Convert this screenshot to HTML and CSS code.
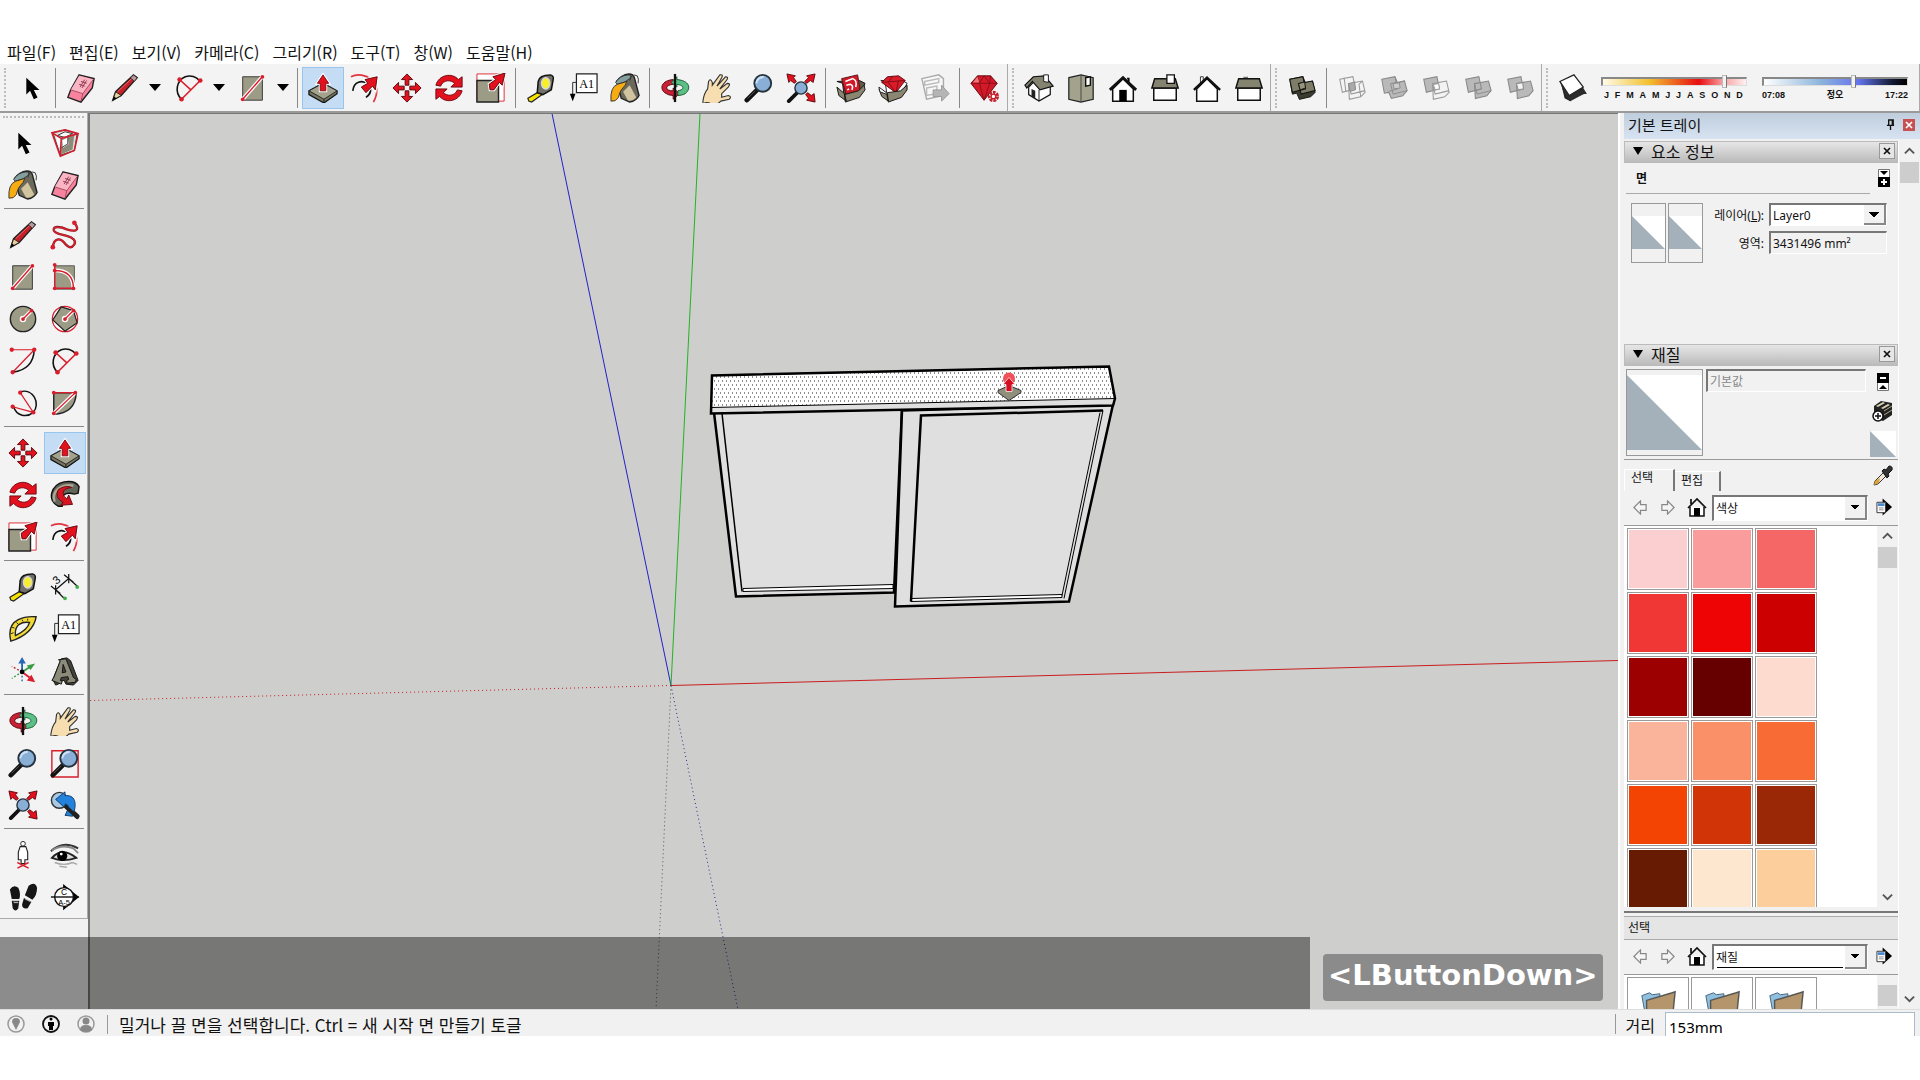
FILE: index.html
```html
<!DOCTYPE html>
<html lang="ko">
<head>
    <meta charset="UTF-8">
    <meta name="viewport" content="width=device-width, initial-scale=1.0">
    <title>SketchUp</title>
    <link rel="stylesheet" href="styles.css">
</head>
<body>
    <!-- Icon set shared by both toolbars -->
    <svg class="sprite" aria-hidden="true">
        <symbol id="i-select" viewBox="0 0 32 32"><path d="M11 5v18l4-4 4 9 4-2-4-8h6z"/></symbol>
        <symbol id="i-component" viewBox="0 0 32 32">
            <path d="M3 5l13-3 13 4-3 18-15 5z" fill="#ddd" stroke="#333"/>
            <path d="M12 12l14-5-2 16-12 5z" fill="#8c8b79"/><path d="M6 8l6 3v10l-3-1zM13 13l6-3 1 7-6 4z" fill="#fff"/>
            <path d="M8 8l8-4 8 2-8 4zM19 10v7l-7 4" fill="#fff" stroke="#333"/>
            <path d="M2 5l14-3 14 4-4 18-15 6zM2 5l10 6 18-5M12 11l-1 19" fill="none" stroke="#cf2030" stroke-width="1.700"/>
        </symbol>
        <symbol id="i-eraser" viewBox="0 0 32 32">
            <path d="M14 2l16 4-2 10-12 15L2 26l3-8z" fill="#f7839e" stroke="#222" stroke-width="1.5"/>
            <path d="M14 3l15 4-11 15L5 18z" fill="#fbb4c3"/><path d="M5 18l13 4-2 8M18 22L29 7" fill="none" stroke="#a5475d"/>
            <path d="M15 15l5-8M17 16l5-8M14 12l6 2M16 9l6 2" stroke="#8a3a4c"/>
        </symbol>
        <symbol id="i-pencil" viewBox="0 0 32 32">
            <path d="M3 29l3-9L25 2l4 3-17 19z" fill="#c8202b" stroke="#222" stroke-width="1.5"/>
            <path d="M3 29l3-9 6 4z" fill="#e8cf9b" stroke="#222"/><path d="M3 29l1-4 3 2z"/>
            <path d="M22 5l3-3 4 3-3 4z" fill="#b9999b" stroke="#333"/><path d="M8 20L23 6" stroke="#ee6a6a"/>
        </symbol>
        <symbol id="i-arc" viewBox="0 0 32 32">
            <path d="M8 28C0 20 3 8 12 4c6-2 12 0 15 4" fill="none" stroke="#111" stroke-width="1.7"/>
            <path d="M8 28L28 8M7 8l11 10" stroke="#d81e2c" stroke-width="1.7"/>
            <g fill="#d81e2c"><circle cx="8" cy="28" r="2.5"/><circle cx="28" cy="8" r="2.5"/><circle cx="6" cy="7" r="2.5"/></g>
        </symbol>
        <symbol id="i-rect" viewBox="0 0 32 32">
            <path d="M5 4h21v25H5z" fill="#9c9b86" stroke="#333"/>
            <path d="M5 28L26 4" stroke="#fff" stroke-width="4"/><path d="M5 28L26 4" stroke="#d81e2c" stroke-width="1.5"/>
            <g fill="#d81e2c"><circle cx="5" cy="28" r="2"/><circle cx="26" cy="4" r="2"/></g>
        </symbol>
        <symbol id="i-rotrect" viewBox="0 0 32 32">
            <path d="M5 4h21v25H5z" fill="#9c9b86" stroke="#555"/>
            <path d="M5 9q20 0 20 19" fill="none" stroke="#fff" stroke-width="4"/>
            <path d="M5 3v25h20Q25 9 5 9" fill="none" stroke="#d81e2c" stroke-width="1.5"/>
            <g fill="#d81e2c"><circle cx="5" cy="3" r="2"/><circle cx="5" cy="9" r="2"/><circle cx="5" cy="28" r="2"/><circle cx="25" cy="28" r="2"/></g>
        </symbol>
        <symbol id="i-freehand" viewBox="0 0 32 32">
            <path d="M26 3c8 10-2 9-8 7-7-3-15-4-14 1 1 4 8 4 14 6 7 2 10 5 8 9-4 6-8 2-11-2-4-5-11-5-12 5" fill="none" stroke="#8e1620" stroke-width="2.5"/>
            <path d="M26 3c8 10-2 9-8 7-7-3-15-4-14 1 1 4 8 4 14 6 7 2 10 5 8 9-4 6-8 2-11-2-4-5-11-5-12 5" fill="none" stroke="#dc2430" stroke-width="1.3"/>
            <g fill="#d81e2c"><circle cx="26" cy="3" r="2.5"/><circle cx="3" cy="29" r="2.5"/></g>
        </symbol>
        <symbol id="i-circle" viewBox="0 0 32 32">
            <circle cx="16" cy="16" r="13.5" fill="#9c9b86" stroke="#222" stroke-width="1.5"/>
            <path d="M16 16l9-9" stroke="#fff" stroke-width="4"/><circle cx="16" cy="16" r="3.5" fill="#fff"/>
            <path d="M16 16l9-9" stroke="#d81e2c" stroke-width="1.5"/><g fill="#d81e2c"><circle cx="16" cy="16" r="2"/><circle cx="25" cy="7" r="2"/></g>
        </symbol>
        <symbol id="i-polygon" viewBox="0 0 32 32">
            <circle cx="16" cy="16" r="13.5" fill="#fff" stroke="#d81e2c" stroke-width="1.3"/>
            <path d="M12 3l13 4 4 13-13 9L3 17z" fill="#9c9b86" stroke="#222" stroke-width="1.3"/>
            <path d="M16 16l9-9" stroke="#fff" stroke-width="4"/><circle cx="16" cy="16" r="3.5" fill="#fff"/>
            <path d="M16 16l9-9" stroke="#d81e2c" stroke-width="1.5"/><g fill="#d81e2c"><circle cx="16" cy="16" r="2"/><circle cx="25" cy="7" r="2"/></g>
        </symbol>
        <symbol id="i-arc1" viewBox="0 0 32 32">
            <path d="M28 4Q27 25 5 28" fill="none" stroke="#111" stroke-width="1.6"/>
            <path d="M4 4h24L5 28" fill="none" stroke="#d81e2c" stroke-width="1.3"/>
            <g fill="#d81e2c"><circle cx="4" cy="4" r="2.3"/><circle cx="28" cy="4" r="2.3"/><circle cx="5" cy="28" r="2.3"/></g>
        </symbol>
        <symbol id="i-arc3" viewBox="0 0 32 32">
            <path d="M13 4c14-4 22 13 14 22-7 6-18 4-21-6" fill="none" stroke="#111" stroke-width="1.6"/>
            <path d="M13 5l14 21L5 20" fill="none" stroke="#d81e2c" stroke-width="1.3"/>
            <g fill="#d81e2c"><circle cx="13" cy="5" r="2.3"/><circle cx="27" cy="26" r="2.3"/><circle cx="5" cy="20" r="2.3"/></g>
        </symbol>
        <symbol id="i-pie" viewBox="0 0 32 32">
            <path d="M4 5h24q-1 22-24 23z" fill="#9c9b86" stroke="#222" stroke-width="1.5"/>
            <path d="M4 27L27 5" stroke="#fff" stroke-width="4"/><path d="M4 5h23L4 27" fill="none" stroke="#d81e2c" stroke-width="1.3"/>
            <g fill="#d81e2c"><circle cx="4" cy="5" r="2"/><circle cx="27" cy="5" r="2"/><circle cx="4" cy="27" r="2"/></g>
        </symbol>
        <symbol id="i-pushpull" viewBox="0 0 32 32">
            <path d="M1 19l15-8 15 8v3L17 32 1 23z" fill="#76755f" stroke="#111" stroke-width="1.300"/>
            <path d="M1 19l15-8 15 8-14 9z" fill="#a3a28d" stroke="#222"/><path d="M17 28v4" stroke="#111"/>
            <path d="M13 19v-8H10l6-9 6 9h-3v8z" fill="#e3101d" stroke="#fff" stroke-width="3"/>
            <path d="M13 19v-8H10l6-9 6 9h-3v8z" fill="#e3101d" stroke="#7d0d14"/>
        </symbol>
        <symbol id="i-offset" viewBox="0 0 32 32">
            <path d="M1 4C15-3 37 10 25 31" fill="none" stroke="#e23440" stroke-width="1.8"/>
            <path d="M3 19c1-10 10-12 16-7 5 5 3 11-2 14" fill="none" stroke="#111" stroke-width="1.8"/>
            <path d="M12 15l7-4-3-4L29 4l-2 14-3-4-7 7z" fill="#e3101d" stroke="#fff" stroke-width="3"/>
            <path d="M12 15l7-4-3-4L29 4l-2 14-3-4-7 7z" fill="#e3101d" stroke="#5c0a10"/>
        </symbol>
        <symbol id="i-move" viewBox="0 0 32 32">
            <path d="M16 1l-6 6h4v6h4V7h4zM16 31l6-6h-4v-6h-4v6h-4zM1 16l6 6v-4h6v-4H7v-4zM31 16l-6-6v4h-6v4h6v4z" fill="#e3101d" stroke="#5c0a10"/>
        </symbol>
        <symbol id="i-rotate" viewBox="0 0 32 32">
            <path d="M2 13C5 2 19-1 26 7l4-3v11H18l4-4c-4-4-12-4-15 3z" fill="#e3101d" stroke="#6b0b12"/>
            <path d="M30 19C27 30 13 33 6 25l-4 3V17h12l-4 4c4 4 12 4 15-3z" fill="#e3101d" stroke="#6b0b12"/>
        </symbol>
        <symbol id="i-scale" viewBox="0 0 32 32">
            <path d="M1 1h29v29H1z" fill="#fff" stroke="#df2733"/>
            <path d="M1 8h23v23H1z" fill="#9c9b86" stroke="#222" stroke-width="1.5"/>
            <path d="M14 12l7-5-3-3 13-4-3 13-3-3-6 8-4 0z" fill="#e3101d" stroke="#fff" stroke-width="3"/>
            <path d="M14 12l7-5-3-3 13-4-3 13-3-3-6 8-4 0z" fill="#e3101d" stroke="#5c0a10"/>
        </symbol>
        <symbol id="i-follow" viewBox="0 0 32 32">
            <path d="M9 28C-4 22 1 5 15 2q12-2 16 5l-1 7-4 1c-10-3-15 2-12 8l-1 5z" fill="#66655a" stroke="#111" stroke-width="1.5"/>
            <path d="M5 23C1 12 12 4 25 6" fill="none" stroke="#aaa996" stroke-width="2.5"/>
            <path d="M9 10q8-5 14-2-9 1-9 6 0 4 4 6l2-4 4 10-13 1 3-3q-10-6-5-14z" fill="#d81420" stroke="#6b0b12"/>
        </symbol>
        <symbol id="i-tape" viewBox="0 0 32 32">
            <path d="M2 27l15-9 3 3-14 10-3-1z" fill="#f4e100" stroke="#222" stroke-width="1.3"/>
            <path d="M13 9q1-7 13-7 4 1 3 5l-2 11-9 5-6-2z" fill="#706f68" stroke="#111" stroke-width="1.6"/>
            <ellipse cx="21" cy="11" rx="4.5" ry="6" fill="#f9ef26" stroke="#d8d8d8" stroke-width="1.5"/>
        </symbol>
        <symbol id="i-text" viewBox="0 0 32 32">
            <path d="M9 1h22v20H9z" fill="#fff" stroke="#222" stroke-width="1.3"/><path d="M9 10H5v14" fill="none" stroke="#222"/>
            <path d="M2 22h6l-3 8z"/><text x="20" y="16" font-size="13" text-anchor="middle" font-family="Liberation Serif, serif">A1</text>
        </symbol>
        <symbol id="i-paint" viewBox="0 0 32 32">
            <path d="M7 9Q12 2 20 1q5 0 6 4l5 19q-3 6-10 7l-9-4z" fill="#6b695c" stroke="#222" stroke-width="1.500"/>
            <path d="M14 20l7-7 7 13q-5 5-9 3z" fill="#d2c49f"/><path d="M6 10Q10 3 19 2q5 0 2 4-4 4-13 6z" fill="#83a09f" stroke="#333"/>
            <path d="M1 30q-1-15 7-18l10-3q-1 4-6 9-2 3-3 8-3 5-8 4z" fill="#f8ac14" stroke="#333"/>
            <path d="M21 8q2-8 8-5 2 3 1 8" fill="none" stroke="#333"/>
        </symbol>
        <symbol id="i-dimension" viewBox="0 0 32 32">
            <path d="M6 19L20 7M20 7l10 9M6 19l9 9M1 15l10 8M6 14v10M15 3l10 8M20 2v10" stroke="#111" stroke-width="1.3"/>
            <g fill="#3fae49"><circle cx="29" cy="16" r="2"/><circle cx="16" cy="28" r="2"/></g>
            <text x="4" y="12" font-size="12" transform="rotate(-40 8 9)" font-family="Liberation Sans, sans-serif">3</text>
        </symbol>
        <symbol id="i-protractor" viewBox="0 0 32 32">
            <path d="M3 29Q-1 12 11 6q8-4 19-3-3 18-27 26zM8 23q13-6 15-14-7-1-11 2-5 4-4 12z" fill="#f2d936" fill-rule="evenodd" stroke="#222" stroke-width="1.5"/>
            <path d="M3 21l3-1M4 14l3 1M9 9l2 2M15 6l1 2M21 5v2" stroke="#222"/>
        </symbol>
        <symbol id="i-axes" viewBox="0 0 32 32">
            <path d="M15 17V29" stroke="#2e62a8" stroke-width="1.500" stroke-dasharray="2 2"/><path d="M15 17L4 11" stroke="#c2202c" stroke-width="1.500" stroke-dasharray="2 2"/><path d="M15 17L4 24" stroke="#3a9b45" stroke-width="1.500" stroke-dasharray="2 2"/>
            <path d="M15 17V7" stroke="#2868b8" stroke-width="2"/><path d="M15 17l8-5" stroke="#3a9b45" stroke-width="2"/><path d="M15 17l8 6" stroke="#d81e2c" stroke-width="2"/>
            <path d="M11 8l4-7 4 7z" fill="#2868b8"/><path d="M20 10l9-2-5 7z" fill="#3a9b45"/><path d="M25 20l4 8-9-2z" fill="#d81e2c"/><circle cx="15" cy="17" r="2.5"/>
        </symbol>
        <symbol id="i-text3d" viewBox="0 0 32 32">
            <path d="M3 25l9-22 6-1 4 3 8 21-5 5-8-1-2-4-4 1-2 3-3 1z" fill="#44433a" stroke="#111"/>
            <path d="M2 26l2-3 7-18-2-1 8-1 8 20 3 2-1 3-9 1v-3l2-1-1-3-7 1-1 3 2 1-1 3zM13 18l4-1-3-8z" fill="#8c8b7a" fill-rule="evenodd" stroke="#111"/>
        </symbol>
        <symbol id="i-orbit" viewBox="0 0 32 32">
            <path d="M14 7C2 8-1 16 5 21q4 3 9 3v4l7-6-7-6v3q-6 0-7-3 0-3 7-4z" fill="#c92035" stroke="#5c0a10"/>
            <path d="M18 7c13 1 16 9 9 15-2 1-5 2-8 2v-5c6-1 7-4 3-6l-4-1v3l-6-5 6-6z" fill="#5cbf85" stroke="#155c32"/>
            <path d="M16 1v30" stroke="#111" stroke-width="2.5"/>
        </symbol>
        <symbol id="i-pan" viewBox="0 0 32 32">
            <path d="M1 30q1-8 5-13l1-8q2-4 4 1v3l8-11q4-1 2 3l-5 9 9-10q4 0 1 4l-7 9 8-6q4 0 1 4l-7 7 0 4 7-2q4 1 1 4l-9 2q-6 6-10 3-5-3-9 0z" fill="#f7deb0" stroke="#333" stroke-width="1.2"/>
        </symbol>
        <symbol id="i-zoom" viewBox="0 0 32 32">
            <path d="M3 29L14 18" stroke="#111" stroke-width="5" stroke-linecap="round"/><path d="M4 27l8-8" stroke="#555" stroke-width="1"/>
            <circle cx="20" cy="11" r="9" fill="#89afd6" stroke="#26323c" stroke-width="2"/><path d="M13 11q1-6 8-7" fill="none" stroke="#cfe2f5" stroke-width="2"/>
        </symbol>
        <symbol id="i-zoomwin" viewBox="0 0 32 32">
            <path d="M2 3h28v28H2z" fill="none" stroke="#d81e2c" stroke-width="1.5"/>
            <path d="M3 29L14 18" stroke="#111" stroke-width="5" stroke-linecap="round"/><path d="M4 27l8-8" stroke="#555" stroke-width="1"/>
            <circle cx="20" cy="11" r="9" fill="#89afd6" stroke="#26323c" stroke-width="2"/><path d="M13 11q1-6 8-7" fill="none" stroke="#cfe2f5" stroke-width="2"/>
        </symbol>
        <symbol id="i-extents" viewBox="0 0 32 32">
            <path d="M3 30l10-10" stroke="#111" stroke-width="4" stroke-linecap="round"/>
            <circle cx="16" cy="16" r="6.5" fill="#89afd6" stroke="#26323c" stroke-width="1.5"/>
            <path d="M1 1l9 2-2 2 3 4-2 2-4-3-2 2zM31 1l-9 2 2 2-4 4 2 2 4-3 3 2zM31 31l-9-2 2-2-3-4 2-2 4 3 3-2z" fill="#e3101d" stroke="#5c0a10"/>
        </symbol>
        <symbol id="i-previous" viewBox="0 0 32 32">
            <circle cx="10" cy="11" r="8.500" fill="#a8c8e4" stroke="#333" stroke-width="1.500"/>
            <path d="M18 18l11 10" stroke="#222" stroke-width="5" stroke-linecap="round"/>
            <path d="M6 10l10-8v4c10-1 14 7 8 22l-8-1c4-7 5-12 0-12v4z" fill="#2383dc" stroke="#0e3c6c"/>
            <path d="M17 18l12 11" stroke="#222" stroke-width="4" stroke-linecap="round"/>
        </symbol>
        <symbol id="i-warehouse" viewBox="0 0 32 32">
            <path d="M1 9l6 2 2 17 15-2 7-15-6-3z" fill="#5d594b" stroke="#111"/>
            <path d="M6 6l17-4 3 17-15 5z" fill="#cf1b28" stroke="#5c0a10"/><path d="M10 9l8-3q5 2 3 9M11 13l4-1q4 1 2 6M12 18l2-1" fill="none" stroke="#fff" stroke-width="1.700"/>
            <path d="M1 15l8 7 2 8-8-6zM9 23l15-4 6-6 1 5-6 8-15 5z" fill="#8b8672" stroke="#111"/>
        </symbol>
        <symbol id="i-extware" viewBox="0 0 32 32">
            <path d="M3 8l5 4 2 14 14-2 7-13-5-3z" fill="#fff" stroke="#222"/>
            <path d="M4 10l6-6 12-1 7 5-10 13z" fill="#dc1b2a" stroke="#5c0a10"/><path d="M4 10l25-2M11 10l8 11M22 8l-3 13M11 10l5-7" stroke="#7d0d14"/>
            <path d="M1 17l8 4 2 9-7-5zM10 21l14-2 7-6v5l-6 8-14 5z" fill="#8b8672" stroke="#111"/><path d="M1 15l8 6 1 2-8-3z" fill="#fff" stroke="#222"/>
        </symbol>
        <symbol id="i-layout" viewBox="0 0 32 32">
            <path d="M2 6l18-4 5 4v18l-18 4z" fill="#f7f7f7" stroke="#aaa" stroke-width="1.5"/>
            <path d="M5 9l15-3v4L5 13zM7 16l11-2v8L7 24z" fill="none" stroke="#bbb" stroke-width="1.5"/>
            <path d="M14 18h9v-5l8 9-8 8v-5h-9z" fill="#b5b5b5" stroke="#999"/>
        </symbol>
        <symbol id="i-extmgr" viewBox="0 0 32 32">
            <path d="M1 11l7-8h14l7 8-14 18z" fill="#d41a28" stroke="#5c0a10"/><path d="M1 11h28M10 11l5 18 6-18M8 3l2 8 5-8 6 8 1-8" fill="none" stroke="#8b0f19"/>
            <path d="M3 10l5-6 2 6z" fill="#f0767c"/>
            <circle cx="25" cy="25" r="4.500" fill="#fff" stroke="#c21f2c" stroke-width="3" stroke-dasharray="3 1"/><circle cx="25" cy="25" r="2.500" fill="none" stroke="#c21f2c" stroke-width="1.500"/>
        </symbol>
        <symbol id="i-iso" viewBox="0 0 32 32">
            <path d="M5 15l9-9 14 8v9l-12 7-11-7z" fill="#fff" stroke="#111" stroke-width="1.3"/>
            <path d="M8 17l4 2v9l-4-3z" fill="#222"/><path d="M1 13L10 4l12-1 9 11-14 4-8-9-6 7z" fill="#84836f" stroke="#111" stroke-width="1.3"/>
            <path d="M21 2h5v8l-5-1zM16 18v12" fill="#fff" stroke="#111"/>
        </symbol>
        <symbol id="i-top" viewBox="0 0 32 32">
            <path d="M3 5l13-3 13 3v23l-13 3-13-3z" fill="#a3a28d" stroke="#222" stroke-width="1.300"/><path d="M16 2v29" stroke="#444"/><path d="M21 5l5-1v9l-5 1z" fill="#fff" stroke="#111" stroke-width="1.500"/>
        </symbol>
        <symbol id="i-front" viewBox="0 0 32 32">
            <path d="M5 17L16 6l11 11v13H5z" fill="#fff" stroke="#111" stroke-width="1.6"/><path d="M20 5h3v7"/><path d="M2 18L16 5l14 13" fill="none" stroke="#111" stroke-width="3"/><path d="M12 18h8v12h-8z"/>
        </symbol>
        <symbol id="i-right" viewBox="0 0 32 32">
            <path d="M4 16h24v13H4z" fill="#fff" stroke="#111" stroke-width="1.6"/><path d="M5 6h22l3 10H2z" fill="#84836f" stroke="#111" stroke-width="1.6"/><path d="M18 2h8v9h-8z" fill="#fff" stroke="#111" stroke-width="1.4"/>
        </symbol>
        <symbol id="i-back" viewBox="0 0 32 32">
            <path d="M9 4h3v8H9z" fill="#fff" stroke="#333"/><path d="M5 17L16 6l11 11v13H5z" fill="#fff" stroke="#111" stroke-width="1.6"/><path d="M2 18L16 5l14 13" fill="none" stroke="#111" stroke-width="2.500"/>
        </symbol>
        <symbol id="i-left" viewBox="0 0 32 32">
            <path d="M10 4h5v3h-5z" fill="#777"/><path d="M4 16h24v13H4z" fill="#fff" stroke="#111" stroke-width="1.6"/><path d="M5 6h22l3 10H2z" fill="#84836f" stroke="#111" stroke-width="1.6"/>
        </symbol>
        <symbol id="i-shell" viewBox="0 0 32 32">
            <path d="M2 6l15-3 3 7 8-2 3 13-5 5-13 3-3-7-5 1z" fill="#3c3b30" stroke="#111"/>
            <path d="M2 6l15-3 3 14-15 4zM12 11l16-3 3 11-16 4z" fill="#7f7d68" stroke="#111" stroke-width="1.200"/>
            <path d="M12 11l7-2 1 7-6 2z" fill="#98967f" stroke="#111"/>
        </symbol>
        <symbol id="i-intersect" viewBox="0 0 32 32">
            <path d="M2 6l15-3 3 14-15 4zM12 11l16-3 3 13-5 5-13 3zM28 8l-4 4 2 14M12 11l3 12 16-4M7 4l2 16" fill="none" stroke="#999" stroke-width="1.2"/>
            <path d="M12 11l7-2 1 9-6 2z" fill="#aaa" stroke="#888"/>
        </symbol>
        <symbol id="i-union" viewBox="0 0 32 32">
            <path d="M2 6l15-3 3 7 8-2 3 11-5 6-13 3-3-7-5 1z" fill="#b9b9b9" stroke="#888" stroke-width="1.2"/>
            <path d="M17 3l3 14-10 3M12 11l16-3M12 11l3 12 16-4" fill="none" stroke="#888"/><path d="M15 11l7-1 1 6-7 1z" fill="#ccc" stroke="#888"/>
        </symbol>
        <symbol id="i-subtract" viewBox="0 0 32 32">
            <path d="M2 6l15-3 3 14-15 4z" fill="#b9b9b9" stroke="#888" stroke-width="1.2"/>
            <path d="M12 11l16-3 3 13-5 5-13 3zM12 11l3 12 16-4" fill="none" stroke="#999" stroke-width="1.2"/><path d="M13 12l6-1 1 6-5 1z" fill="#fff" stroke="#999"/>
        </symbol>
        <symbol id="i-trim" viewBox="0 0 32 32">
            <path d="M2 6l15-3 3 14-15 4zM12 11l16-3 3 11-5 6-13 3z" fill="#b9b9b9" stroke="#888" stroke-width="1.2"/>
            <path d="M12 11l3 12 16-4" fill="none" stroke="#888"/>
        </symbol>
        <symbol id="i-split" viewBox="0 0 32 32">
            <path d="M2 6l15-3 3 14-15 4zM12 11l16-3 3 11-5 6-13 3z" fill="#b9b9b9" stroke="#888" stroke-width="1.2"/>
            <path d="M12 11l7-1 1 7-6 1z" fill="#f3f3f3" stroke="#888"/>
        </symbol>
        <symbol id="i-shadow" viewBox="0 0 32 32">
            <path d="M3 10l8 14 20-2-5-5-13 13-6-3z" fill="#222"/><path d="M2 9l5 14 6 7 17-9-3-5z" fill="#2b2b2b"/>
            <path d="M2 9l15-7 10 13-15 9z" fill="#fff" stroke="#222" stroke-width="1.3"/>
        </symbol>
        <symbol id="i-camera" viewBox="0 0 32 32">
            <circle cx="16" cy="4" r="2.500" fill="#fff" stroke="#222"/><path d="M13 7h6l2 6v8h-3v4h-4v-4h-3v-8z" fill="#fff" stroke="#222" stroke-width="1.200"/>
            <path d="M10 24l12 6M22 24l-12 6" stroke="#d81e2c" stroke-width="1.5"/>
        </symbol>
        <symbol id="i-look" viewBox="0 0 32 32">
            <path d="M1 12Q14 0 30 9" fill="none" stroke="#333" stroke-width="2"/><path d="M2 11q11-7 23-2l5 5" fill="none" stroke="#888" stroke-width="2"/>
            <path d="M2 19Q13 7 28 19 14 24 2 19z" fill="#ddd" stroke="#222" stroke-width="2"/>
            <circle cx="13" cy="17" r="5.500"/><circle cx="12" cy="15" r="1.500" fill="#fff"/><path d="M5 24q10 4 19 0M24 24l5 2M10 28l8 1" fill="none" stroke="#aaa" stroke-width="1.500"/>
        </symbol>
        <symbol id="i-walk" viewBox="0 0 32 32">
            <path d="M2 8q4-6 9-2 3 6 1 12H4zM4 20h8l-1 8q-3 5-6 0zM18 14l4-10q7-5 9 2 0 8-5 13zM17 17l8 4-4 7q-6 1-6-4z" fill="#161616"/>
            <path d="M5 20h6M6 22h5M18 18l6 3" stroke="#ccc"/>
        </symbol>
        <symbol id="i-section" viewBox="0 0 32 32">
            <path d="M14 2l17 14-17 14z"/><circle cx="15" cy="16" r="10" fill="#fff" stroke="#111" stroke-width="1.500"/><path d="M1 16h30" stroke="#111" stroke-width="1.500"/>
            <g font-size="9" text-anchor="middle" font-family="Liberation Sans, sans-serif"><text x="15" y="14">C</text><text x="15" y="24" font-size="8">A-5</text></g>
        </symbol>
        <symbol id="i-home" viewBox="0 0 20 20"><path d="M3 10v9h14v-9" fill="#fff" stroke="#111" stroke-width="1.5"/><path d="M1 11l9-9 9 9M4 7V2" fill="none" stroke="#111" stroke-width="1.700"/><path d="M7 11h6v8H7z"/></symbol>
        <symbol id="i-prev" viewBox="0 0 16 16"><path d="M1 8l7-7v4h6v6H8v4z" fill="#f5f5f5" stroke="#888" stroke-width="1.3"/></symbol>
        <symbol id="i-next" viewBox="0 0 16 16"><path d="M15 8L8 1v4H2v6h6v4z" fill="#f5f5f5" stroke="#888" stroke-width="1.300"/></symbol>
        <symbol id="i-details" viewBox="0 0 18 18"><path d="M7 0l10 9-10 9z"/><path d="M1 4h9v11H1z" fill="#fff" stroke="#333"/><path d="M2 5h7v3H2z" fill="#4a8ad0"/><path d="M3 10h5M3 12h5" stroke="#888"/></symbol>
        <symbol id="i-x" viewBox="0 0 10 10"><path d="M2 2l6 6M8 2L2 8" stroke="currentColor" stroke-width="1.700"/></symbol>
        <symbol id="i-up" viewBox="0 0 12 12"><path d="M1 8l5-5 5 5" fill="none" stroke="#555" stroke-width="2"/></symbol>
        <symbol id="i-down" viewBox="0 0 12 12"><path d="M1 4l5 5 5-5" fill="none" stroke="#555" stroke-width="2"/></symbol>
        <symbol id="i-expand" viewBox="0 0 12 18"><path d="M.5.5h11v17H.5z" fill="#fff" stroke="#777"/><path d="M2 2h8L6 6zM0 8h12v10H0z"/><path d="M3 13h6M6 10v6" stroke="#fff" stroke-width="2"/></symbol>
        <symbol id="i-collapse" viewBox="0 0 12 18"><path d="M.5.5h11v17H.5z" fill="#fff" stroke="#777"/><path d="M0 0h12v10H0zM2 16h8l-4-4z"/><path d="M3 5h6" stroke="#fff" stroke-width="2"/></symbol>
        <symbol id="i-create" viewBox="0 0 22 22"><path d="M2 6l7-5 11 2v12l-9 6-9-4z" fill="#222"/><path d="M4 6l7-4 2 1-7 4zM9 8l7-4 2 1-7 4z" fill="#d8d2b4"/><path d="M12 11l8-5M12 15l8-5" stroke="#aaa68c"/><circle cx="6" cy="16" r="5" fill="#fff" stroke="#111" stroke-width="1.500"/><path d="M3 16h6M6 13v6" stroke="#111" stroke-width="1.500"/></symbol>
        <symbol id="i-dropper" viewBox="0 0 22 22"><path d="M2 20l1-4 9-9 3 3-9 9z" fill="#f0e9d8" stroke="#333"/><path d="M2 20l1-4 5-3-1 5z" fill="#d9a23a"/><path d="M10 6l2-2 2 1 3-4q4 0 3 4l-4 4 1 2-2 2z" fill="#333" stroke="#111"/></symbol>
        <symbol id="i-folder" viewBox="0 0 40 36"><path d="M3 5l8-3 3 2 8-1v30H8z" fill="#8fc0df" stroke="#46637a"/><path d="M8 10L35 2l3-1-3 30-27 5z" fill="#b5956b" stroke="#555" stroke-width="1.500"/></symbol>
        <symbol id="i-blank" viewBox="0 0 74 74" preserveAspectRatio="none"><path d="M0 0h74v74H0z" fill="#fff"/><path d="M0 0v74h74z" fill="#a4b1ba"/></symbol>
    </svg>

    <div class="app">
        <nav class="menubar" aria-label="메뉴">
            <button>파일(F)</button><button>편집(E)</button><button>보기(V)</button><button>카메라(C)</button><button>그리기(R)</button><button>도구(T)</button><button>창(W)</button><button>도움말(H)</button>
        </nav>

        <header class="toolbar">
            <div class="group">
                <span class="grip"></span>
                <button class="tool" aria-label="선택"><svg><use href="#i-select"/></svg></button>
                <span class="sep"></span>
                <button class="tool" aria-label="지우개"><svg><use href="#i-eraser"/></svg></button>
                <button class="tool wide" aria-label="선"><svg><use href="#i-pencil"/></svg></button>
                <button class="drop" aria-label="선 도구"></button>
                <button class="tool wide" aria-label="호"><svg><use href="#i-arc"/></svg></button>
                <button class="drop" aria-label="호 도구"></button>
                <button class="tool wide" aria-label="직사각형"><svg><use href="#i-rect"/></svg></button>
                <button class="drop" aria-label="도형 도구"></button>
                <span class="sep"></span>
                <button class="tool active" aria-label="밀기/끌기"><svg><use href="#i-pushpull"/></svg></button>
                <button class="tool" aria-label="오프셋"><svg><use href="#i-offset"/></svg></button>
                <button class="tool" aria-label="이동"><svg><use href="#i-move"/></svg></button>
                <button class="tool" aria-label="회전"><svg><use href="#i-rotate"/></svg></button>
                <button class="tool" aria-label="배율"><svg><use href="#i-scale"/></svg></button>
                <span class="sep"></span>
                <button class="tool" aria-label="줄자"><svg><use href="#i-tape"/></svg></button>
                <button class="tool" aria-label="텍스트"><svg><use href="#i-text"/></svg></button>
                <button class="tool" aria-label="페인트통"><svg><use href="#i-paint"/></svg></button>
                <span class="sep"></span>
                <button class="tool" aria-label="궤도"><svg><use href="#i-orbit"/></svg></button>
                <button class="tool" aria-label="화면이동"><svg><use href="#i-pan"/></svg></button>
                <button class="tool" aria-label="확대/축소"><svg><use href="#i-zoom"/></svg></button>
                <button class="tool" aria-label="범위 확대"><svg><use href="#i-extents"/></svg></button>
                <span class="sep"></span>
                <button class="tool" aria-label="3D Warehouse"><svg><use href="#i-warehouse"/></svg></button>
                <button class="tool" aria-label="Extension Warehouse"><svg><use href="#i-extware"/></svg></button>
                <button class="tool" aria-label="LayOut"><svg><use href="#i-layout"/></svg></button>
                <span class="sep"></span>
                <button class="tool" aria-label="확장 프로그램"><svg><use href="#i-extmgr"/></svg></button>
            </div>
            <div class="group">
                <span class="grip"></span>
                <button class="tool" aria-label="등각투영"><svg><use href="#i-iso"/></svg></button>
                <button class="tool" aria-label="위"><svg><use href="#i-top"/></svg></button>
                <button class="tool" aria-label="앞"><svg><use href="#i-front"/></svg></button>
                <button class="tool" aria-label="오른쪽"><svg><use href="#i-right"/></svg></button>
                <button class="tool" aria-label="뒤"><svg><use href="#i-back"/></svg></button>
                <button class="tool" aria-label="왼쪽"><svg><use href="#i-left"/></svg></button>
            </div>
            <div class="group">
                <span class="grip"></span>
                <button class="tool small" aria-label="외부 쉘"><svg><use href="#i-shell"/></svg></button>
                <span class="sep"></span>
                <button class="tool small" aria-label="교차"><svg><use href="#i-intersect"/></svg></button>
                <button class="tool small" aria-label="결합"><svg><use href="#i-union"/></svg></button>
                <button class="tool small" aria-label="빼기"><svg><use href="#i-subtract"/></svg></button>
                <button class="tool small" aria-label="트림"><svg><use href="#i-trim"/></svg></button>
                <button class="tool small" aria-label="분할"><svg><use href="#i-split"/></svg></button>
            </div>
            <div class="group shadows">
                <span class="grip"></span>
                <button class="tool" aria-label="그림자"><svg><use href="#i-shadow"/></svg></button>
                <div class="slider">
                    <input type="range" class="month" min="0" max="100" value="86" aria-label="날짜">
                    <div class="ticks"><span>J</span><span>F</span><span>M</span><span>A</span><span>M</span><span>J</span><span>J</span><span>A</span><span>S</span><span>O</span><span>N</span><span>D</span></div>
                </div>
                <div class="slider">
                    <input type="range" class="hour" min="0" max="100" value="63" aria-label="시간">
                    <div class="hours"><span>07:08</span><span>정오</span><span>17:22</span></div>
                </div>
            </div>
        </header>

        <main class="workspace">
            <aside class="sidebar">
                <div class="palette">
                    <span class="grip-h"></span>
                    <button class="tool" aria-label="선택"><svg><use href="#i-select"/></svg></button>
                    <button class="tool" aria-label="구성요소"><svg><use href="#i-component"/></svg></button>
                    <button class="tool" aria-label="페인트통"><svg><use href="#i-paint"/></svg></button>
                    <button class="tool" aria-label="지우개"><svg><use href="#i-eraser"/></svg></button>
                    <hr>
                    <button class="tool" aria-label="선"><svg><use href="#i-pencil"/></svg></button>
                    <button class="tool" aria-label="자유곡선"><svg><use href="#i-freehand"/></svg></button>
                    <button class="tool" aria-label="직사각형"><svg><use href="#i-rect"/></svg></button>
                    <button class="tool" aria-label="회전된 직사각형"><svg><use href="#i-rotrect"/></svg></button>
                    <button class="tool" aria-label="원"><svg><use href="#i-circle"/></svg></button>
                    <button class="tool" aria-label="다각형"><svg><use href="#i-polygon"/></svg></button>
                    <button class="tool" aria-label="호"><svg><use href="#i-arc1"/></svg></button>
                    <button class="tool" aria-label="2점 호"><svg><use href="#i-arc"/></svg></button>
                    <button class="tool" aria-label="3점 호"><svg><use href="#i-arc3"/></svg></button>
                    <button class="tool" aria-label="파이"><svg><use href="#i-pie"/></svg></button>
                    <hr>
                    <button class="tool" aria-label="이동"><svg><use href="#i-move"/></svg></button>
                    <button class="tool active" aria-label="밀기/끌기"><svg><use href="#i-pushpull"/></svg></button>
                    <button class="tool" aria-label="회전"><svg><use href="#i-rotate"/></svg></button>
                    <button class="tool" aria-label="따라가기"><svg><use href="#i-follow"/></svg></button>
                    <button class="tool" aria-label="배율"><svg><use href="#i-scale"/></svg></button>
                    <button class="tool" aria-label="오프셋"><svg><use href="#i-offset"/></svg></button>
                    <hr>
                    <button class="tool" aria-label="줄자"><svg><use href="#i-tape"/></svg></button>
                    <button class="tool" aria-label="치수"><svg><use href="#i-dimension"/></svg></button>
                    <button class="tool" aria-label="각도기"><svg><use href="#i-protractor"/></svg></button>
                    <button class="tool" aria-label="텍스트"><svg><use href="#i-text"/></svg></button>
                    <button class="tool" aria-label="축"><svg><use href="#i-axes"/></svg></button>
                    <button class="tool" aria-label="3D 텍스트"><svg><use href="#i-text3d"/></svg></button>
                    <hr>
                    <button class="tool" aria-label="궤도"><svg><use href="#i-orbit"/></svg></button>
                    <button class="tool" aria-label="화면이동"><svg><use href="#i-pan"/></svg></button>
                    <button class="tool" aria-label="확대/축소"><svg><use href="#i-zoom"/></svg></button>
                    <button class="tool" aria-label="창 확대"><svg><use href="#i-zoomwin"/></svg></button>
                    <button class="tool" aria-label="범위 확대"><svg><use href="#i-extents"/></svg></button>
                    <button class="tool" aria-label="이전"><svg><use href="#i-previous"/></svg></button>
                    <hr>
                    <button class="tool" aria-label="카메라 배치"><svg><use href="#i-camera"/></svg></button>
                    <button class="tool" aria-label="둘러보기"><svg><use href="#i-look"/></svg></button>
                    <button class="tool" aria-label="걷기"><svg><use href="#i-walk"/></svg></button>
                    <button class="tool" aria-label="단면"><svg><use href="#i-section"/></svg></button>
                </div>
            </aside>

            <section class="canvas">
                <svg viewBox="90 113 1528 896" preserveAspectRatio="xMidYMid slice" aria-label="모델">
                    <defs>
                        <pattern id="dots" width="4" height="8" patternUnits="userSpaceOnUse">
                            <rect width="4" height="8" fill="#fff"/>
                            <rect width="1" height="1" fill="#222"/><rect x="2" y="4" width="1" height="1" fill="#222"/>
                        </pattern>
                    </defs>
                    <!-- axes -->
                    <path d="M671 685L552 113" stroke="#2222c8"/>
                    <path d="M671 685L700 113" stroke="#22b422"/>
                    <path d="M671 685L1618 660" stroke="#c81e1e"/>
                    <path d="M671 685L90 700" stroke="#c81e1e" stroke-dasharray="1 3"/>
                    <path d="M671 685L656 1009" stroke="#3c643c" stroke-dasharray="1 3"/>
                    <path d="M671 685L738 1009" stroke="#2a2a90" stroke-dasharray="1 3"/>
                    <!-- left door -->
                    <path d="M714 412L736 596 894 592 902 408z" fill="#dfdfdf" stroke="#000" stroke-width="2.5"/>
                    <path d="M743 588L893 584v4l-150 3z" fill="#fff" stroke="#000"/>
                    <path d="M722 413L742 591" stroke="#000" stroke-width="1.5"/>
                    <!-- right door -->
                    <path d="M902 410L895 606 1069 601 1113 404z" fill="#dfdfdf" stroke="#000" stroke-width="2.5"/>
                    <path d="M911 598L1062 594v3l-151 4z" fill="#fff" stroke="#000"/>
                    <path d="M911 601L921 415 1103 410" fill="none" stroke="#000" stroke-width="2.5"/>
                    <path d="M1103 410L1064 598M1100 412L1062 595" stroke="#000"/>
                    <!-- top rail, face being pulled -->
                    <path d="M712 375L1109 366 1115 398 1114 405 711 413z" fill="#dfdfdf"/>
                    <path d="M712 375L1109 366 1115 398 711 407z" fill="url(#dots)" stroke="#000"/>
                    <path d="M712 375L1109 366 1115 398 1113 405 711 413z" fill="none" stroke="#000" stroke-width="2.5"/>
                    <!-- push/pull cursor -->
                    <path d="M998 390l11-5 12 5v2l-12 8-11-8z" fill="#908f7c" stroke="#333"/>
                    <circle cx="1009" cy="378" r="6" fill="#f0505a"/>
                    <path d="M1006 391v-7h-3l6-7 6 7h-3v7z" fill="#d50f20" stroke="#fff" stroke-width=".7"/>
                </svg>
            </section>

            <aside class="tray">
                <h1 class="tray-title">기본 트레이
                    <button class="pin" aria-label="고정"><svg viewBox="0 0 10 12"><path d="M3 1h5v6H3zM1 7h8M5 7v5M7 1v6" fill="none" stroke="#111" stroke-width="1.500"/></svg></button>
                    <button class="close-red" aria-label="닫기"><svg><use href="#i-x"/></svg></button>
                </h1>
                <div class="tray-body">
                    <div class="panels">
                        <section class="panel entity">
                            <h2>요소 정보<button class="close" aria-label="닫기"><svg><use href="#i-x"/></svg></button></h2>
                            <div class="entity-head"><b>면</b><button class="mini" aria-label="세부정보"><svg><use href="#i-expand"/></svg></button></div>
                            <div class="entity-body">
                                <div class="thumb"><svg><use href="#i-blank"/></svg></div>
                                <div class="thumb"><svg><use href="#i-blank"/></svg></div>
                                <div class="fields">
                                    <label for="layer">레이어(<u>L</u>):</label>
                                    <div class="combo"><select id="layer"><option>Layer0</option></select></div>
                                    <label for="area">영역:</label>
                                    <input id="area" type="text" value="3431496 mm²" readonly>
                                </div>
                            </div>
                        </section>

                        <section class="panel materials">
                            <h2>재질<button class="close" aria-label="닫기"><svg><use href="#i-x"/></svg></button></h2>
                            <div class="material-head">
                                <div class="preview"><svg><use href="#i-blank"/></svg></div>
                                <input type="text" value="기본값" aria-label="재질 이름" disabled>
                                <div class="side">
                                    <button class="mini" aria-label="보조 창"><svg><use href="#i-collapse"/></svg></button>
                                    <button aria-label="재질 만들기"><svg class="create"><use href="#i-create"/></svg></button>
                                    <button aria-label="기본 재질"><svg class="default"><use href="#i-blank"/></svg></button>
                                </div>
                            </div>
                            <div class="tabs">
                                <button class="tab selected">선택</button><button class="tab">편집</button>
                                <button class="dropper" aria-label="샘플 페인트"><svg><use href="#i-dropper"/></svg></button>
                            </div>
                            <div class="browse">
                                <button aria-label="뒤로"><svg class="arrow"><use href="#i-prev"/></svg></button>
                                <button aria-label="앞으로"><svg class="arrow"><use href="#i-next"/></svg></button>
                                <button aria-label="모델 내"><svg class="home"><use href="#i-home"/></svg></button>
                                <div class="combo"><select aria-label="재질 모음"><option>색상</option></select></div>
                                <button aria-label="세부정보"><svg class="details"><use href="#i-details"/></svg></button>
                            </div>
                            <div class="list swatch-list">
                                <div class="tiles" id="swatches"></div>
                                <div class="scroll"><svg><use href="#i-up"/></svg><span class="bar"></span><svg><use href="#i-down"/></svg></div>
                            </div>
                        </section>

                        <section class="panel second">
                            <h3>선택</h3>
                            <div class="browse">
                                <button aria-label="뒤로"><svg class="arrow"><use href="#i-prev"/></svg></button>
                                <button aria-label="앞으로"><svg class="arrow"><use href="#i-next"/></svg></button>
                                <button aria-label="모델 내"><svg class="home"><use href="#i-home"/></svg></button>
                                <div class="combo underlined"><select aria-label="보조 재질 모음"><option>재질</option></select></div>
                                <button aria-label="세부정보"><svg class="details"><use href="#i-details"/></svg></button>
                            </div>
                            <div class="list">
                                <div class="tiles">
                                    <button class="tile" aria-label="폴더 1"><svg><use href="#i-folder"/></svg></button>
                                    <button class="tile" aria-label="폴더 2"><svg><use href="#i-folder"/></svg></button>
                                    <button class="tile" aria-label="폴더 3"><svg><use href="#i-folder"/></svg></button>
                                </div>
                                <div class="scroll"><svg><use href="#i-up"/></svg><span class="bar"></span></div>
                            </div>
                        </section>
                    </div>
                    <div class="scroll outer"><svg><use href="#i-up"/></svg><span class="bar"></span><svg><use href="#i-down"/></svg></div>
                </div>
            </aside>

            <!-- screen recorder overlay -->
            <div class="caption-band"></div>
            <div class="key-badge">&lt;LButtonDown&gt;</div>
        </main>

        <footer class="statusbar">
            <button aria-label="위치"><svg viewBox="0 0 20 20"><circle cx="10" cy="10" r="8" fill="none" stroke="#999" stroke-width="1.5"/><path d="M10 16L6 8q0-4 4-4t4 4z" fill="#888"/></svg></button>
            <button aria-label="크레딧"><svg viewBox="0 0 20 20"><circle cx="10" cy="10" r="8" fill="none" stroke="#111" stroke-width="1.8"/><circle cx="10" cy="5" r="1.5"/><path d="M7 8h6v4h-1v4H8v-4H7z"/></svg></button>
            <button aria-label="로그인"><svg viewBox="0 0 20 20"><circle cx="10" cy="10" r="8" fill="none" stroke="#999" stroke-width="1.5"/><circle cx="10" cy="7" r="3.500" fill="#888"/><path d="M4 16q0-5 6-5t6 5q-6 4-12 0z" fill="#888"/></svg></button>
            <p>밀거나 끌 면을 선택합니다. Ctrl = 새 시작 면 만들기 토글</p>
            <label for="distance">거리</label>
            <input id="distance" type="text" value="153mm">
        </footer>
    </div>

    <script>
        // Colors shown in the material browser
        const colors = [
            '#fbcfcf', '#fa9c9c', '#f56666',
            '#f13636', '#ee0404', '#cc0000',
            '#9c0000', '#660000', '#fddccf',
            '#fbb49c', '#fa9067', '#f86b34',
            '#f44404', '#d13507', '#9a2806',
            '#671b03', '#fee7cf', '#fcce9b'
        ];
        const swatches = document.getElementById('swatches');
        for (const color of colors) {
            const tile = document.createElement('button');
            tile.className = 'tile';
            tile.setAttribute('aria-label', color);
            tile.style.backgroundColor = color;
            swatches.appendChild(tile);
        }
    </script>
</body>
</html>
```
FILE: styles.css
```css
* {
    box-sizing: border-box;
}
body {
    margin: 0;
    background-color: #fff;
    color: #111;
    font-family: "Noto Sans", "Noto Sans CJK KR", sans-serif;
    font-size: 12px;
}
button {
    padding: 0;
    border: none;
    background: none;
    color: inherit;
    font: inherit;
}
svg {
    display: block;
}
.sprite {
    display: none;
}
.app {
    display: flex;
    flex-direction: column;
    height: 100vh;
    padding: 40px 0 44px;
}

/* Menu */
.menubar {
    display: flex;
    gap: 13px;
    height: 24px;
    padding: 0 7px;
    font-family: "Noto Sans CJK KR", sans-serif;
    font-size: 16px;
    line-height: 24px;
    white-space: nowrap;
}
.menubar button {
    line-height: 24px;
}

/* Top toolbar */
.toolbar {
    display: flex;
    height: 49px;
    background-color: #f3f3f3;
    border-bottom: 2px solid #9a9a9a;
}
.group {
    display: flex;
    align-items: center;
    border-right: 1px solid #aaa;
}
.group:first-child {
    padding-right: 1px;
}
.grip {
    width: 3px;
    height: 40px;
    margin: 0 3px 0 4px;
    border-left: 2px dotted #bbb;
}
.sep {
    width: 1px;
    height: 40px;
    margin: 0 4px 0 3px;
    background-color: #888;
}
.tool {
    display: flex;
    justify-content: center;
    align-items: center;
    width: 42px;
    height: 42px;
    border: 1px solid transparent;
}
.tool svg {
    width: 30px;
    height: 30px;
}
.tool.small svg {
    width: 28px;
    height: 28px;
}
.tool.wide {
    width: 45px;
}
.tool.active {
    background-color: #c4ddf4;
    border-color: #97c5ee;
}
.drop {
    display: flex;
    width: 19px;
    padding-left: 2px;
}
.drop::before {
    content: "";
    border: 6px solid transparent;
    border-top: 7px solid #000;
    border-bottom: none;
}
.shadows {
    flex: 1;
    padding-right: 11px;
}
.slider {
    flex: 1;
    margin-left: 7px;
    font: bold 9px "Liberation Sans", "Noto Sans CJK KR", sans-serif;
}
.slider + .slider {
    margin-left: 15px;
}
.slider input {
    appearance: none;
    display: block;
    width: 100%;
    height: 9px;
    margin: 2px 0 3px;
    border: 1px solid #ddd;
    border-top: 2px solid #888;
    border-left: 2px solid #888;
}
.slider .month {
    background: linear-gradient(90deg, #fffbe8, #f2c230 32%, #e80c10 67%, #f59a9a 83%, #fff0f0);
}
.slider .hour {
    background: linear-gradient(90deg, #fff, #91b7dc 38%, #6474ee 66%, #101830 90%, #000);
}
.slider input::-webkit-slider-thumb {
    appearance: none;
    width: 5px;
    height: 13px;
    background-color: #f3f3f3;
    border: 1px solid #bbb;
    border-right-color: #777;
}
.ticks, .hours {
    display: flex;
    justify-content: space-between;
    height: 12px;
    line-height: 12px;
}
.ticks {
    padding: 0 4px 0 3px;
}

/* Left toolbar */
.workspace {
    position: relative;
    display: flex;
    flex: 1;
    min-height: 0;
    background-color: #f1f1f1;
}
.sidebar {
    width: 90px;
    border-right: 2px solid #777;
}
.palette {
    display: grid;
    grid-template-columns: 42px 42px;
    padding-left: 2px;
    background-color: #f3f3f3;
    border-right: 1px solid #aaa;
    border-bottom: 1px solid #aaa;
}
.grip-h {
    grid-column: span 2;
    height: 6px;
    margin: 3px 2px 0 1px;
    border-top: 2px dotted #bbb;
}
.palette hr {
    grid-column: span 2;
    width: 80px;
    height: 1px;
    margin: 2px 2px 5px;
    border: none;
    background-color: #888;
}

/* Model view */
.canvas {
    flex: 1;
    min-width: 0;
    background-color: #cececc;
    border-top: 1px solid #777;
}
.canvas svg {
    width: 100%;
    height: 100%;
    fill: none;
}
.caption-band {
    position: absolute;
    left: 0;
    bottom: 0;
    width: 1310px;
    height: 72px;
    background-color: rgba(0, 0, 0, 0.42);
}
.key-badge {
    position: absolute;
    left: 1323px;
    bottom: 8px;
    padding: 0 5px 4px;
    border-radius: 4px;
    background-color: #8b8b8b;
    color: #fff;
    font: bold 29px/43px "DejaVu Sans", sans-serif;
}

/* Tray */
.tray {
    display: flex;
    flex-direction: column;
    width: 302px;
    padding-left: 4px;
    border-left: 2px solid #fff;
}
.tray h1, .tray h2, .tray h3 {
    display: flex;
    align-items: center;
    margin: 0;
    font-family: "Noto Sans CJK KR", sans-serif;
    font-weight: normal;
    line-height: 18px;
}
.tray .tray-title {
    height: 26px;
    padding: 0 5px 3px 4px;
    background: linear-gradient(#bfcddd, #d7e3f1);
    font-size: 15px;
}
.pin {
    margin-left: auto;
    margin-right: 8px;
}
.pin svg {
    width: 9px;
    height: 11px;
}
.close-red {
    width: 12px;
    height: 12px;
    background-color: #c75050;
    color: #fff;
}
.tray-body {
    display: flex;
    flex: 1;
    min-height: 0;
    padding-top: 2px;
}
.panels {
    display: flex;
    flex-direction: column;
    flex: 1;
    min-width: 0;
    border-right: 1px solid #fff;
}
.tray h2 {
    height: 22px;
    padding: 0 2px 3px 8px;
    border: 1px solid #bbb;
    border-bottom: none;
    background: linear-gradient(#e6e6e6, #b9b9b9);
    font-size: 16px;
}
.tray h2::before {
    content: "";
    margin-right: 8px;
    border: 5px solid transparent;
    border-top: 8px solid #000;
    border-bottom: none;
}
.close {
    width: 16px;
    height: 16px;
    margin-left: auto;
    padding: 2px;
    border: 1px solid #999;
    background-color: #e6e6e6;
}
.close svg, .close-red svg {
    width: 10px;
    height: 10px;
    margin: auto;
}
.entity {
    height: 203px;
}
.mini svg {
    width: 12px;
    height: 18px;
}
.entity-head {
    display: flex;
    justify-content: space-between;
    align-items: center;
    height: 31px;
    margin: 0 28px 0 2px;
    padding-left: 10px;
    border-bottom: 1px solid #aaa;
}
.entity-head .mini {
    margin-right: -20px;
}
.entity-body {
    display: flex;
    gap: 2px;
    padding: 9px 11px 0 7px;
}
.thumb {
    width: 35px;
    height: 60px;
    padding-top: 12px;
    border: 1px solid #999;
}
.thumb svg {
    width: 33px;
    height: 33px;
}
.fields {
    display: grid;
    grid-template-columns: 1fr 118px;
    gap: 5px;
    flex: 1;
    align-content: start;
    align-items: center;
    text-align: right;
}
.tray input, .combo {
    width: 100%;
    height: 23px;
    border: 2px solid #777;
    border-right: 1px solid #fff;
    border-bottom: 1px solid #fff;
    background-color: #f1f1f1;
}
.tray input, .combo select {
    padding: 0 2px;
    color: #111;
    font-family: inherit;
    font-size: 12px;
}
.combo {
    position: relative;
    background-color: #fff;
}
.combo select {
    appearance: none;
    width: 100%;
    height: 100%;
    border: none;
    background: none;
}
.combo::after {
    content: "";
    position: absolute;
    top: 0;
    right: 0;
    bottom: 0;
    width: 20px;
    border-right: 2px solid #888;
    border-bottom: 2px solid #888;
    background: conic-gradient(from -45deg at 50% 100%, #000 90deg, #f1f1f1 0) center / 10px 5px no-repeat #f1f1f1;
    pointer-events: none;
}
.materials {
    display: flex;
    flex-direction: column;
    flex: 1;
    min-height: 0;
    border-bottom: 4px solid #f1f1f1;
}
.material-head {
    display: flex;
    gap: 3px;
    height: 94px;
    padding: 3px 2px 0;
    border-bottom: 1px solid #999;
}
.preview {
    width: 77px;
    height: 87px;
    padding-top: 5px;
    border: 1px solid #999;
}
.preview svg {
    width: 75px;
    height: 75px;
}
.tray .material-head input {
    width: 160px;
    color: #888;
}
.side {
    display: flex;
    flex-direction: column;
    align-items: center;
    gap: 9px;
    flex: 1;
    padding-top: 4px;
}
.create {
    width: 22px;
    height: 22px;
}
.default {
    width: 26px;
    height: 26px;
}
.tabs {
    display: flex;
    align-items: flex-end;
    height: 31px;
}
.tab {
    width: 46px;
    height: 20px;
    padding: 0 10px 3px 0;
    border-top: 1px solid #fff;
    border-right: 2px solid #777;
    line-height: 15px;
}
.tab.selected {
    width: 51px;
    height: 22px;
    padding: 0 14px 6px 0;
    border-left: 1px solid #fff;
}
.dropper {
    margin: 0 4px 4px auto;
}
.dropper svg {
    width: 22px;
    height: 22px;
}
.browse {
    display: flex;
    align-items: center;
    height: 35px;
    padding: 0 5px 0 9px;
    border-bottom: 1px solid #999;
}
.arrow {
    width: 15px;
    height: 15px;
    margin-right: 12px;
}
.home {
    width: 20px;
    height: 20px;
    margin-right: 5px;
}
.browse button {
    padding-bottom: 2px;
}
.browse .combo {
    flex: 1;
    height: 26px;
    margin-right: 8px;
}
.underlined::before {
    content: "";
    position: absolute;
    left: 3px;
    right: 24px;
    bottom: 1px;
    border-bottom: 1px solid #000;
}
.details {
    width: 17px;
    height: 18px;
}
.list {
    display: flex;
    flex: 1;
    min-height: 0;
    overflow: hidden;
    background-color: #fff;
}
.tiles {
    display: grid;
    grid-template-columns: repeat(3, 62px);
    grid-auto-rows: 62px;
    gap: 2px;
    align-content: start;
    flex: 1;
    padding: 2px 3px;
}
.tile {
    border: 1px solid #999;
    box-shadow: inset 0 0 0 1px #fff;
}
.tile svg {
    width: 38px;
    height: 36px;
    margin: 0 auto;
}
.scroll {
    display: flex;
    flex-direction: column;
    align-items: center;
    width: 21px;
    padding: 5px 0;
    background-color: #f1f1f1;
}
.scroll svg {
    width: 11px;
    height: 11px;
}
.scroll .bar {
    width: 19px;
    height: 21px;
    margin: 5px 0 auto;
    background-color: #cdcdcd;
    flex-shrink: 0;
}
.second {
    display: flex;
    flex-direction: column;
    height: 98px;
    border-top: 2px solid #777;
}
.tray h3 {
    height: 24px;
    margin-top: 3px;
    padding: 0 0 3px 4px;
    border: 1px solid #aaa;
    border-width: 1px 0;
    background-color: #e5e5e5;
    font-size: 12px;
}

/* Status bar */
.statusbar {
    display: flex;
    align-items: center;
    height: 27px;
    overflow: hidden;
    padding: 2px 5px 0 0;
    border-top: 1px solid #ddd;
    background-color: #f1f1f1;
    font-family: "Noto Sans CJK KR", sans-serif;
}
.statusbar button {
    width: 35px;
    padding-left: 6px;
}
.statusbar svg {
    width: 20px;
    height: 20px;
}
.statusbar p {
    flex: 1;
    margin: 0 0 0 2px;
    padding: 1px 0 0 11px;
    border-left: 1px solid #999;
    font-size: 17px;
    line-height: 18px;
}
.statusbar label {
    padding: 2px 10px 0;
    border-left: 1px solid #999;
    font-size: 16px;
    line-height: 18px;
}
.statusbar input {
    align-self: flex-start;
    width: 250px;
    height: 30px;
    padding: 0 3px;
    border: 1px solid #aabccc;
    background-color: #fff;
    font: 15px "Noto Sans", sans-serif;
}
```
